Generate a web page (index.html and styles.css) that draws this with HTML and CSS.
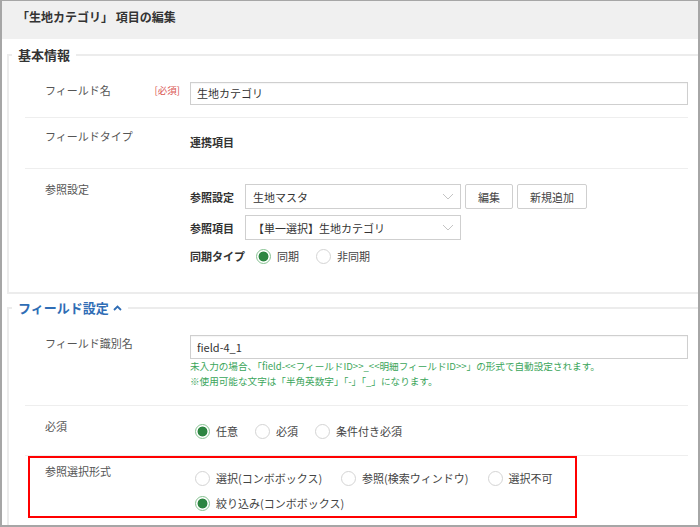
FILE: index.html
```html
<!DOCTYPE html>
<html lang="ja">
<head>
<meta charset="utf-8">
<link rel="stylesheet" href="styles.css">
</head>
<body>
<div class="frame">
  <div class="header">「生地カテゴリ」 項目の編集</div>

  <fieldset class="sec">
    <legend class="sec-title">基本情報</legend>
    <div class="rows">
      <div class="row">
        <div class="lab"><span>フィールド名</span><span class="req">[必須]</span></div>
        <div class="val"><div class="input">生地カテゴリ</div></div>
      </div>
      <div class="row row-type">
        <div class="lab"><span>フィールドタイプ</span></div>
        <div class="val val-bold">連携項目</div>
      </div>
      <div class="row row-ref last">
        <div class="lab"><span>参照設定</span></div>
        <div class="val">
          <div class="sub-row">
            <span class="sub-lab">参照設定</span>
            <div class="select"><span>生地マスタ</span><svg class="chev" width="12" height="7" viewBox="0 0 12 7"><path d="M1 1 L6 6 L11 1" fill="none" stroke="#c4c4c4" stroke-width="1"/></svg></div>
            <button class="btn btn-edit">編集</button>
            <button class="btn btn-add">新規追加</button>
          </div>
          <div class="sub-row">
            <span class="sub-lab">参照項目</span>
            <div class="select"><span>【単一選択】生地カテゴリ</span><svg class="chev" width="12" height="7" viewBox="0 0 12 7"><path d="M1 1 L6 6 L11 1" fill="none" stroke="#c4c4c4" stroke-width="1"/></svg></div>
          </div>
          <div class="sub-row sub-radio">
            <span class="sub-lab">同期タイプ</span>
            <div class="radios">
              <label class="opt"><span class="rb on"></span>同期</label>
              <label class="opt"><span class="rb"></span>非同期</label>
            </div>
          </div>
        </div>
      </div>
    </div>
  </fieldset>

  <fieldset class="sec sec2">
    <legend class="sec-title blue">フィールド設定<svg class="caret" width="9" height="6" viewBox="0 0 9 6"><path d="M1 5 L4.5 1.5 L8 5" fill="none" stroke="#2f6db5" stroke-width="1.8"/></svg></legend>
    <div class="rows">
      <div class="row row-id">
        <div class="lab"><span>フィールド識別名</span></div>
        <div class="val">
          <div class="input input-id">field-4_1</div>
          <div class="help">未入力の場合、「field-&lt;&lt;フィールドID&gt;&gt;_&lt;&lt;明細フィールドID&gt;&gt;」の形式で自動設定されます。</div>
          <div class="help">※使用可能な文字は「半角英数字」「-」「_」になります。</div>
        </div>
      </div>
      <div class="row row-req">
        <div class="lab"><span>必須</span></div>
        <div class="val">
          <div class="radios radios-req">
            <label class="opt"><span class="rb on"></span>任意</label>
            <label class="opt"><span class="rb"></span>必須</label>
            <label class="opt"><span class="rb"></span>条件付き必須</label>
          </div>
        </div>
      </div>
      <div class="row row-sel last">
        <div class="lab"><span>参照選択形式</span></div>
        <div class="val">
          <div class="radios radios-wrap">
            <label class="opt"><span class="rb"></span>選択(コンボボックス)</label>
            <label class="opt"><span class="rb"></span>参照(検索ウィンドウ)</label>
            <label class="opt"><span class="rb"></span>選択不可</label>
            <label class="opt"><span class="rb on"></span>絞り込み(コンボボックス)</label>
          </div>
        </div>
      </div>
    </div>
  </fieldset>

  <div class="highlight"></div>
</div>
</body>
</html>
```

FILE: styles.css
```css
body {
  margin: 0;
  font-family: "Noto Sans CJK JP", "Noto Sans", sans-serif;
  font-size: 11px;
  color: #333;
  background: #fff;
}

.frame {
  position: relative;
  width: 700px;
  height: 527px;
  box-sizing: border-box;
  border: 2px solid #a6a6a6;
  border-top-width: 1px;
  overflow: hidden;
  background: #fff;
}

.header {
  height: 38px;
  box-sizing: border-box;
  background: #f0f0f0;
  padding: 7px 0 0 15px;
  font-size: 12px;
  font-weight: bold;
  line-height: 18px;
  color: #333;
}

.sec {
  margin: 7px 0 0 5px;
  padding: 6px 10px 16px 0;
  border: 2px solid #ececec;
  border-right: 0;
  min-inline-size: 0;
}

.sec2 {
  margin-top: 5px;
}

.sec-title {
  margin-left: 3px;
  padding: 0 6px;
  font-size: 13px;
  font-weight: bold;
  line-height: 18px;
  color: #333;
}

.sec-title.blue {
  color: #2f6db5;
}

.caret {
  margin-left: 4px;
  vertical-align: 2px;
}

.rows {
  margin-left: 16px;
}

.row {
  display: grid;
  grid-template-columns: 135px 1fr;
  column-gap: 10px;
  padding: 12px 0 12px 20px;
  border-bottom: 1px solid #eeeeee;
}

.row.last {
  border-bottom: 0;
}

.lab {
  display: flex;
  justify-content: space-between;
  align-items: flex-start;
  line-height: 16px;
  color: #555;
}

.req {
  color: #d9534f;
  font-size: 9.5px;
  line-height: 16px;
}

.input {
  height: 23px;
  box-sizing: border-box;
  border: 1px solid #cfcfcf;
  padding: 0 6px;
  line-height: 21px;
  color: #333;
  box-shadow: inset 0 1px 1px rgba(0, 0, 0, 0.04);
}

.input-id {
  height: 24px;
  line-height: 22px;
}

.row-type {
  padding: 10px 0 18px 20px;
}

.val-bold {
  padding-top: 6px;
  font-weight: bold;
  line-height: 16px;
  color: #333;
}

.row-ref .val {
  padding-top: 3px;
}

.sub-row {
  display: flex;
  align-items: center;
  margin-bottom: 6px;
}

.sub-row.sub-radio {
  margin-top: 8px;
  margin-bottom: 0;
}

.sub-lab {
  font-weight: bold;
  margin-right: 11px;
  line-height: 16px;
  color: #333;
}

.select {
  width: 216px;
  height: 25px;
  box-sizing: border-box;
  border: 1px solid #cfcfcf;
  display: flex;
  align-items: center;
  justify-content: space-between;
  padding: 0 6px 0 7px;
  color: #333;
}

.btn {
  height: 25px;
  box-sizing: border-box;
  border: 1px solid #cfcfcf;
  border-radius: 2px;
  background: #fff;
  font-family: inherit;
  font-size: 11px;
  color: #444;
  padding: 0;
  margin-left: 4px;
}

.btn-edit {
  width: 48px;
}

.btn-add {
  width: 70px;
}

.radios {
  display: flex;
  align-items: center;
  column-gap: 17px;
}

.radios-req,
.radios-wrap {
  padding-left: 5px;
}

.opt {
  display: flex;
  align-items: center;
  gap: 6px;
  line-height: 16px;
  color: #444;
}

.rb {
  width: 15px;
  height: 15px;
  box-sizing: border-box;
  border: 1px solid #d4d4d4;
  border-radius: 50%;
  background: #fff;
}

.rb.on {
  border-color: #86c291;
  background: radial-gradient(circle, #2c8541 0 4.6px, #ffffff 5.3px);
}

.help {
  font-size: 9.6px;
  line-height: 15px;
  color: #3aa55a;
  white-space: nowrap;
}

.help:first-of-type {
  margin-top: 1px;
}

.row-id {
  padding-bottom: 16px;
}

.row-req {
  padding-bottom: 16px;
}

.row-req .val {
  padding-top: 5px;
}

.row-sel {
  padding-top: 7px;
}

.row-sel .val {
  padding-top: 7px;
}

.radios-wrap {
  flex-wrap: wrap;
  column-gap: 19px;
  row-gap: 9px;
}

.highlight {
  position: absolute;
  left: 26px;
  top: 455px;
  width: 549px;
  height: 62px;
  box-sizing: border-box;
  border: 2px solid #ff0000;
}
```
